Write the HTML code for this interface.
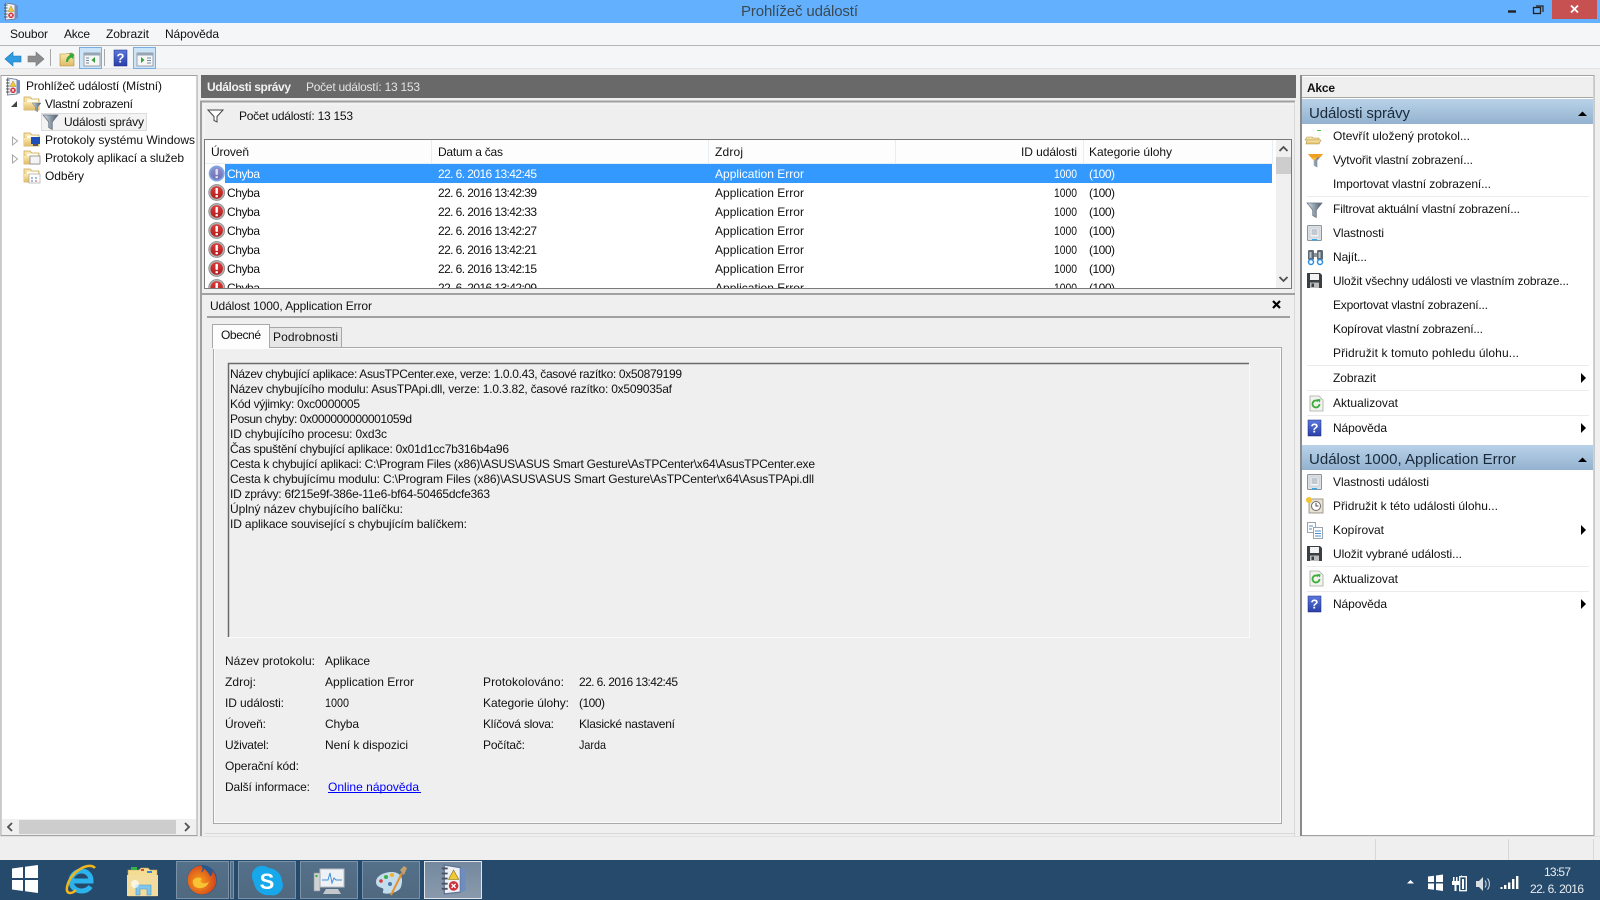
<!DOCTYPE html>
<html lang="cs">
<head>
<meta charset="utf-8">
<title>Prohlížeč událostí</title>
<style>
html,body{margin:0;padding:0;width:1600px;height:900px;overflow:hidden;background:#efefef}
svg{display:block}
text{font-family:"Liberation Sans",sans-serif;font-size:12px;fill:#111}
.w{fill:#fff}
.h{font-size:15px;fill:#1a2a3a}
.t{fill:#fff}
</style>
</head>
<body>
<svg width="1600" height="900" viewBox="0 0 1600 900" xmlns="http://www.w3.org/2000/svg">
<defs>
<linearGradient id="hd" x1="0" y1="0" x2="0" y2="1"><stop offset="0" stop-color="#b9d2e9"/><stop offset="1" stop-color="#93b2d0"/></linearGradient>
<linearGradient id="fold" x1="0" y1="0" x2="0" y2="1"><stop offset="0" stop-color="#fbe9b0"/><stop offset="1" stop-color="#dfbb68"/></linearGradient>
<linearGradient id="fun" x1="0" y1="0" x2="1" y2="0"><stop offset="0" stop-color="#dfe4e8"/><stop offset=".5" stop-color="#8b9cab"/><stop offset="1" stop-color="#4f5c6a"/></linearGradient>
<linearGradient id="sel" x1="0" y1="0" x2="0" y2="1"><stop offset="0" stop-color="#8d8fca"/><stop offset="1" stop-color="#6e70b4"/></linearGradient>
<linearGradient id="red" x1="0" y1="0" x2="0" y2="1"><stop offset="0" stop-color="#dd3b3b"/><stop offset="1" stop-color="#b01c1c"/></linearGradient>
<linearGradient id="tbtn" x1="0" y1="0" x2="0" y2="1"><stop offset="0" stop-color="#54708a"/><stop offset="1" stop-color="#50697f"/></linearGradient>
<linearGradient id="tact" x1="0" y1="0" x2="0" y2="1"><stop offset="0" stop-color="#73889e"/><stop offset="1" stop-color="#8a9aac"/></linearGradient>
<radialGradient id="ff" cx=".4" cy=".55" r=".6"><stop offset="0" stop-color="#f7a21c"/><stop offset="1" stop-color="#d6431a"/></radialGradient>
<linearGradient id="hlp" x1="0" y1="0" x2="0" y2="1"><stop offset="0" stop-color="#5a78dc"/><stop offset="1" stop-color="#2a40a8"/></linearGradient>
<clipPath id="lst"><rect x="205" y="140" width="1086" height="148"/></clipPath>

<g id="err"><circle r="8" fill="#b0b0b0"/><circle r="8" fill="none" stroke="#8a8a8a" stroke-width=".7"/><circle r="6.2" fill="url(#red)"/><rect x="-1.2" y="-4.6" width="2.4" height="6" rx=".8" fill="#fff"/><rect x="-1.2" y="2.6" width="2.4" height="2.2" rx=".6" fill="#fff"/></g>
<g id="errs"><circle r="8" fill="#7ea6e4"/><circle r="6.2" fill="url(#sel)"/><rect x="-1.2" y="-4.6" width="2.4" height="6" rx=".8" fill="#dfe0f4"/><rect x="-1.2" y="2.6" width="2.4" height="2.2" rx=".6" fill="#dfe0f4"/></g>
<g id="folder"><path d="M0 1h6l2 2h7v11H0z" fill="url(#fold)" stroke="#c7a254" stroke-width=".7"/><rect x="3" y="3.5" width="11" height="4" fill="#fffdf2"/><path d="M0 6h15v8H0z" fill="url(#fold)"/></g>
<g id="funnel"><path d="M0 0h15L9.3 7v7.5L5.7 12.5V7z" fill="url(#fun)" stroke="#66717c" stroke-width=".7"/></g>
<g id="prop"><rect x=".5" y=".5" width="14" height="15" rx="1" fill="#dde1e5" stroke="#8c949c"/><rect x="3" y="3" width="9" height="9" fill="#f4f6f8" stroke="#b4bbc2" stroke-width=".6"/><path d="M4.500 5h6M4.500 7h6M4.500 9h6" stroke="#6f7f90" stroke-width=".8"/><rect x="5" y="14" width="5" height="1.400" fill="#34a8e8"/></g>
<g id="disk"><path d="M0 0h13l2 2v13H0z" fill="#3a3f44"/><rect x="3" y="1" width="9" height="6" fill="#f3f3f3"/><rect x="3" y="9.500" width="9" height="5.500" fill="#bcbcbc"/><rect x="4.500" y="10.500" width="2.500" height="3.500" fill="#3a3f44"/></g>
<g id="ref"><path d="M1 0h9l4 4v11H1z" fill="#f2f3ee" stroke="#a6aaa4" stroke-width=".8"/><path d="M10.500 8a3.500 3.500 0 1 1-1.200-2.700" fill="none" stroke="#3cae3c" stroke-width="1.800"/><path d="M8 3l3.500.3-.6 3.300z" fill="#3cae3c"/></g>
<g id="help"><rect width="13" height="16" fill="url(#hlp)" stroke="#18287c" stroke-width=".5"/><text x="6.500" y="12.500" text-anchor="middle" style="font-size:13px;font-weight:bold;fill:#fff">?</text></g>
<g id="nb"><path d="M2.500 0l9.500 1.500v14.500l-9.500 1z" fill="#eef0f4" stroke="#5f7396" stroke-width=".8"/><path d="M12 1.500l3 1v12.500l-3 1z" fill="#6f8cc0"/><path d="M1 2h3.500M1 5h3.500M1 8h3.500M1 11h3.500M1 14h3.500" stroke="#4b535e" stroke-width="1.100"/><path d="M8 3l3 5.500H5z" fill="#f1c933" stroke="#8f7a18" stroke-width=".4"/><circle cx="8" cy="12.300" r="2.800" fill="#cf2e3a"/><path d="M6.800 11.100l2.400 2.400M9.200 11.100l-2.400 2.400" stroke="#fff" stroke-width=".8"/></g>
</defs>

<!-- window background -->
<rect width="1600" height="900" fill="#efefef"/>
<rect width="1600" height="23" fill="#63b0fe"/>
<use href="#nb" transform="translate(3,3)"/>
<text x="741" y="16" textLength="117" style="font-size:15px;fill:#3b4a52">Prohlížeč událostí</text>
<path d="M1508 11.500h8" stroke="#222" stroke-width="2.400"/>
<rect x="1533.500" y="7.500" width="7" height="6" fill="none" stroke="#222" stroke-width="1.300"/><path d="M1536 6h7v6" fill="none" stroke="#222" stroke-width="1.200"/>
<rect x="1552" y="0" width="45" height="19" fill="#c75050"/>
<path d="M1571 5.500l7 7M1578 5.500l-7 7" stroke="#fff" stroke-width="1.800"/>

<!-- menu -->
<rect y="23" width="1600" height="22" fill="#f5f6f8"/>
<rect y="45" width="1600" height="1" fill="#b4b4b4"/>
<text x="10" y="38" textLength="38">Soubor</text>
<text x="64" y="38" textLength="26">Akce</text>
<text x="106" y="38" textLength="43">Zobrazit</text>
<text x="165" y="38" textLength="54">Nápověda</text>

<!-- toolbar -->
<rect y="46" width="1600" height="22" fill="#f5f6f8"/>
<rect y="68" width="1600" height="1" fill="#e2e2e2"/>
<path d="M5 59l8-7v4h8v6h-8v4z" fill="#2f9be0" stroke="#1878b8" stroke-width=".6"/>
<path d="M44 59l-8-7v4h-8v6h8v4z" fill="#8c8c8c" stroke="#777" stroke-width=".6"/>
<rect x="50" y="49" width="1" height="17" fill="#a8a8a8"/>
<path d="M60 54h5l7-1 2 2v11H60z" fill="url(#fold)" stroke="#b08c3c" stroke-width=".6"/>
<path d="M66 62c0-4 2-6 4-7l-1-2 5 1-1 5-1.500-1.500c-2 1-3 2-3.500 4.500z" fill="#39a83a"/>
<rect x="79.500" y="47.500" width="22" height="21" fill="#cce4f7" stroke="#7aaee0"/>
<rect x="84" y="53" width="16" height="13" fill="#f6f6f6" stroke="#8a8f96" stroke-width=".8"/><rect x="84" y="53" width="16" height="2.500" fill="#98a6b4"/><path d="M86 58h3M86 60.500h3M86 63h3" stroke="#6d8aa0"/><path d="M95 57v6l-3.500-3z" fill="#34a03c"/>
<rect x="104" y="49" width="1" height="17" fill="#a8a8a8"/>
<use href="#help" transform="translate(114,50)"/>
<rect x="133.500" y="47.500" width="22" height="21" fill="#cce4f7" stroke="#7aaee0"/>
<rect x="137" y="53" width="16" height="13" fill="#f6f6f6" stroke="#8a8f96" stroke-width=".8"/><rect x="137" y="53" width="16" height="2.500" fill="#98a6b4"/><path d="M147 58h4M147 60.500h4M147 63h4" stroke="#6d8aa0"/><path d="M141 57v6l3.500-3z" fill="#34a03c"/>

<!-- left pane -->
<rect x="1" y="75.500" width="196" height="760" fill="#fff" stroke="#a2a2a2"/>
<use href="#nb" transform="translate(5,78)"/>
<text x="26" y="90" textLength="136">Prohlížeč událostí (Místní)</text>
<path d="M11 107h6v-6z" fill="#444"/>
<use href="#folder" transform="translate(24,96)"/>
<use href="#funnel" transform="translate(32,103) scale(.6)"/>
<text x="45" y="108" textLength="88">Vlastní zobrazení</text>
<rect x="41.500" y="113.500" width="105" height="17" fill="#f3f3f3" stroke="#dcdcdc"/>
<use href="#funnel" transform="translate(43,115)"/>
<text x="64" y="126" textLength="80">Události správy</text>
<path d="M12.500 137v8l5-4z" fill="#fff" stroke="#a6a6a6"/>
<use href="#folder" transform="translate(24,132)"/>
<rect x="31" y="137" width="9" height="7" fill="#1f4fb8"/><rect x="33" y="144" width="5" height="2" fill="#555"/>
<text x="45" y="144" textLength="150">Protokoly systému Windows</text>
<path d="M12.500 155v8l5-4z" fill="#fff" stroke="#a6a6a6"/>
<use href="#folder" transform="translate(24,150)"/>
<rect x="30" y="156" width="10" height="8" fill="#f4f4f4" stroke="#7b7b7b" stroke-width=".7"/>
<text x="45" y="162" textLength="139">Protokoly aplikací a služeb</text>
<use href="#folder" transform="translate(24,168)"/>
<rect x="29" y="174" width="11" height="9" fill="#fff" stroke="#999" stroke-width=".6"/><path d="M31 178h2M35 178h2M31 181h2" stroke="#3875c8"/><path d="M35 181h2" stroke="#d44"/>
<text x="45" y="180" textLength="39">Odběry</text>
<rect x="2" y="819" width="194" height="16" fill="#f0f0f0"/>
<rect x="19" y="820" width="157" height="14" fill="#cdcdcd"/>
<path d="M12 823l-4 4 4 4M185 823l4 4-4 4" fill="none" stroke="#505050" stroke-width="1.800"/>

<!-- center header -->
<rect x="201" y="75" width="1095" height="23" fill="#696969"/>
<text x="207" y="91" textLength="84" style="font-weight:bold;fill:#f2f2f2">Události správy</text>
<text x="306" y="91" textLength="114" style="fill:#e4e4e4">Počet událostí: 13 153</text>

<!-- list panel -->
<path d="M201 836V101.500H1295" fill="none" stroke="#a0a0a0" stroke-width="2"/>
<path d="M204 139v-35h1090" fill="none" stroke="#fff" stroke-width="1" opacity=".5"/>
<path d="M208 110h15l-6 6.500v5.500l-3-1.500v-4z" fill="#fff" stroke="#444" stroke-width="1"/>
<text x="239" y="120" textLength="114">Počet událostí: 13 153</text>
<rect x="204.500" y="139.500" width="1087" height="149" fill="#fff" stroke="#7a7a7a"/>
<rect x="205" y="140" width="1067" height="23" fill="#fdfdfd"/>
<rect x="205" y="163" width="1067" height="1" fill="#e6edf5"/>
<rect x="431" y="140" width="1" height="24" fill="#e6edf5"/>
<rect x="708" y="140" width="1" height="24" fill="#e6edf5"/>
<rect x="895" y="140" width="1" height="24" fill="#e6edf5"/>
<rect x="1083" y="140" width="1" height="24" fill="#e6edf5"/>
<rect x="1272" y="140" width="1" height="24" fill="#e6edf5"/>
<text x="211" y="156" textLength="38">Úroveň</text>
<text x="438" y="156" textLength="65">Datum a čas</text>
<text x="715" y="156" textLength="28">Zdroj</text>
<text x="1021" y="156" textLength="56">ID události</text>
<text x="1089" y="156" textLength="83">Kategorie úlohy</text>

<rect x="225" y="164" width="1047" height="19" fill="#3399ff"/>
<g clip-path="url(#lst)">
<use href="#errs" x="216.700" y="173.500"/>
<text class="w" x="227" y="178" textLength="33">Chyba</text>
<text class="w" x="438" y="178" textLength="99">22. 6. 2016 13:42:45</text>
<text class="w" x="715" y="178" textLength="89">Application Error</text>
<text class="w" x="1054" y="178" textLength="23" lengthAdjust="spacingAndGlyphs">1000</text>
<text class="w" x="1089" y="178" textLength="26">(100)</text>

<use href="#err" x="216.700" y="192.500"/>
<text x="227" y="197" textLength="33">Chyba</text><text x="438" y="197" textLength="99">22. 6. 2016 13:42:39</text><text x="715" y="197" textLength="89">Application Error</text><text x="1054" y="197" textLength="23" lengthAdjust="spacingAndGlyphs">1000</text><text x="1089" y="197" textLength="26">(100)</text>
<use href="#err" x="216.700" y="211.500"/>
<text x="227" y="216" textLength="33">Chyba</text><text x="438" y="216" textLength="99">22. 6. 2016 13:42:33</text><text x="715" y="216" textLength="89">Application Error</text><text x="1054" y="216" textLength="23" lengthAdjust="spacingAndGlyphs">1000</text><text x="1089" y="216" textLength="26">(100)</text>
<use href="#err" x="216.700" y="230.500"/>
<text x="227" y="235" textLength="33">Chyba</text><text x="438" y="235" textLength="99">22. 6. 2016 13:42:27</text><text x="715" y="235" textLength="89">Application Error</text><text x="1054" y="235" textLength="23" lengthAdjust="spacingAndGlyphs">1000</text><text x="1089" y="235" textLength="26">(100)</text>
<use href="#err" x="216.700" y="249.500"/>
<text x="227" y="254" textLength="33">Chyba</text><text x="438" y="254" textLength="99">22. 6. 2016 13:42:21</text><text x="715" y="254" textLength="89">Application Error</text><text x="1054" y="254" textLength="23" lengthAdjust="spacingAndGlyphs">1000</text><text x="1089" y="254" textLength="26">(100)</text>
<use href="#err" x="216.700" y="268.500"/>
<text x="227" y="273" textLength="33">Chyba</text><text x="438" y="273" textLength="99">22. 6. 2016 13:42:15</text><text x="715" y="273" textLength="89">Application Error</text><text x="1054" y="273" textLength="23" lengthAdjust="spacingAndGlyphs">1000</text><text x="1089" y="273" textLength="26">(100)</text>
<use href="#err" x="216.700" y="287.500"/>
<text x="227" y="292" textLength="33">Chyba</text><text x="438" y="292" textLength="99">22. 6. 2016 13:42:09</text><text x="715" y="292" textLength="89">Application Error</text><text x="1054" y="292" textLength="23" lengthAdjust="spacingAndGlyphs">1000</text><text x="1089" y="292" textLength="26">(100)</text>
</g>
<rect x="1276" y="140" width="15" height="148" fill="#f0f0f0"/>
<rect x="1276" y="157" width="15" height="17" fill="#cdcdcd"/>
<path d="M1279.500 151l4-4 4 4M1279.500 277l4 4 4-4" fill="none" stroke="#505050" stroke-width="1.800"/>
<rect x="1294" y="102" width="1" height="734" fill="#d8d8d8"/>

<!-- detail panel -->
<rect x="202" y="293" width="1093" height="2" fill="#a0a0a0"/>
<text x="210" y="310" textLength="162">Událost 1000, Application Error</text>
<path d="M1273 301l7 7M1280 301l-7 7" stroke="#000" stroke-width="2.200"/>
<rect x="207" y="316" width="1083" height="2" fill="#a0a0a0"/>

<rect x="213.500" y="347.500" width="1068" height="476" fill="#efefef" stroke="#a8a8a8"/>
<rect x="214.500" y="348.500" width="1066" height="474" fill="none" stroke="#fbfbfb"/>
<path d="M269.500 347V327.500H341.500V347" fill="#e6e6e6" stroke="#a8a8a8"/>
<text x="273" y="341" textLength="65">Podrobnosti</text>
<path d="M212.500 348V324.500H269.500V348" fill="#fdfdfd" stroke="#a8a8a8"/>
<rect x="213" y="346" width="56" height="3" fill="#fdfdfd"/>
<text x="221" y="339" textLength="40">Obecné</text>

<rect x="228" y="363" width="1021" height="274" fill="#efefef"/>
<path d="M228.500 637V363.500H1249" fill="none" stroke="#6a6a6a" stroke-width="1.500"/>
<path d="M229 637.500H1249.500V363" fill="none" stroke="#fafafa"/>
<text x="230" y="378" textLength="452">Název chybující aplikace: AsusTPCenter.exe, verze: 1.0.0.43, časové razítko: 0x50879199</text>
<text x="230" y="393" textLength="442">Název chybujícího modulu: AsusTPApi.dll, verze: 1.0.3.82, časové razítko: 0x509035af</text>
<text x="230" y="408" textLength="130">Kód výjimky: 0xc0000005</text>
<text x="230" y="423" textLength="182">Posun chyby: 0x000000000001059d</text>
<text x="230" y="438" textLength="157">ID chybujícího procesu: 0xd3c</text>
<text x="230" y="453" textLength="279">Čas spuštění chybující aplikace: 0x01d1cc7b316b4a96</text>
<text x="230" y="468" textLength="585">Cesta k chybující aplikaci: C:\Program Files (x86)\ASUS\ASUS Smart Gesture\AsTPCenter\x64\AsusTPCenter.exe</text>
<text x="230" y="483" textLength="584">Cesta k chybujícímu modulu: C:\Program Files (x86)\ASUS\ASUS Smart Gesture\AsTPCenter\x64\AsusTPApi.dll</text>
<text x="230" y="498" textLength="260">ID zprávy: 6f215e9f-386e-11e6-bf64-50465dcfe363</text>
<text x="230" y="513" textLength="173">Úplný název chybujícího balíčku:</text>
<text x="230" y="528" textLength="237">ID aplikace související s chybujícím balíčkem:</text>

<text x="225" y="665" textLength="90">Název protokolu:</text><text x="325" y="665" textLength="45">Aplikace</text>
<text x="225" y="686" textLength="31">Zdroj:</text><text x="325" y="686" textLength="89">Application Error</text>
<text x="483" y="686" textLength="81">Protokolováno:</text><text x="579" y="686" textLength="99">22. 6. 2016 13:42:45</text>
<text x="225" y="707" textLength="59">ID události:</text><text x="325" y="707" textLength="24" lengthAdjust="spacingAndGlyphs">1000</text>
<text x="483" y="707" textLength="86">Kategorie úlohy:</text><text x="579" y="707" textLength="26">(100)</text>
<text x="225" y="728" textLength="41">Úroveň:</text><text x="325" y="728" textLength="34">Chyba</text>
<text x="483" y="728" textLength="71">Klíčová slova:</text><text x="579" y="728" textLength="96">Klasické nastavení</text>
<text x="225" y="749" textLength="44">Uživatel:</text><text x="325" y="749" textLength="83">Není k dispozici</text>
<text x="483" y="749" textLength="42">Počítač:</text><text x="579" y="749" textLength="27" lengthAdjust="spacingAndGlyphs">Jarda</text>
<text x="225" y="770" textLength="74">Operační kód:</text>
<text x="225" y="791" textLength="85">Další informace:</text>
<text x="328" y="791" textLength="91" style="fill:#0000ff">Online nápověda</text>
<rect x="328" y="792" width="93" height="1" fill="#0000ff"/>
<rect x="205" y="833" width="1089" height="1" fill="#d8d8d8"/>

<!-- right pane -->
<rect x="1301" y="75.500" width="293" height="760" fill="#fff" stroke="#a2a2a2"/>
<rect x="1300" y="75" width="2" height="761" fill="#8a8a8a"/>
<rect x="1302" y="77" width="291" height="20" fill="#efefef"/>
<rect x="1302" y="97" width="291" height="1" fill="#a8a8a8"/>
<text x="1307" y="92" textLength="28" style="font-weight:bold">Akce</text>
<rect x="1302" y="99" width="291" height="25" fill="url(#hd)"/>
<text class="h" x="1309" y="118" textLength="101">Události správy</text>
<path d="M1578 116l4.500-4.500 4.500 4.500z" fill="#000"/>

<path d="M1307 137h5l1 1h6v2h-14z" fill="#f3dfa4" stroke="#b59448" stroke-width=".6"/><path d="M1307 140h14l-2 4h-13z" fill="url(#fold)" stroke="#b59448" stroke-width=".6"/><rect x="1317" y="130" width="4" height="1" fill="#50c850"/>
<text x="1333" y="140" textLength="137">Otevřít uložený protokol...</text>
<path d="M1308 154h15l-5.700 6.500v7l-3.600-2v-5z" fill="url(#fun)"/><path d="M1308 154h15l-3 3.500h-9z" fill="#f0a020"/><path d="M1311 157.500h6l-2.500 3h-1z" fill="#f5b83a"/>
<text x="1333" y="164" textLength="140">Vytvořit vlastní zobrazení...</text>
<text x="1333" y="188" textLength="158">Importovat vlastní zobrazení...</text>
<rect x="1307" y="196" width="282" height="1" fill="#ebebeb"/>
<use href="#funnel" transform="translate(1307,203)"/>
<text x="1333" y="213" textLength="187">Filtrovat aktuální vlastní zobrazení...</text>
<use href="#prop" transform="translate(1307,225)"/>
<text x="1333" y="237" textLength="51">Vlastnosti</text>
<rect x="1308" y="250" width="6" height="10" rx="1.500" fill="#5d6872"/><rect x="1317" y="250" width="6" height="10" rx="1.500" fill="#5d6872"/><rect x="1314" y="253" width="3" height="4" fill="#8c959c"/><rect x="1309.500" y="252" width="2" height="6" fill="#b8c4ce"/><rect x="1318.500" y="252" width="2" height="6" fill="#b8c4ce"/><circle cx="1311" cy="262" r="2.500" fill="#fff" stroke="#2c8ee0" stroke-width="1.500"/><circle cx="1320" cy="262" r="2.500" fill="#fff" stroke="#2c8ee0" stroke-width="1.500"/>
<text x="1333" y="261" textLength="34">Najít...</text>
<use href="#disk" transform="translate(1307,273)"/>
<text x="1333" y="285" textLength="236">Uložit všechny události ve vlastním zobraze...</text>
<text x="1333" y="309" textLength="155">Exportovat vlastní zobrazení...</text>
<text x="1333" y="333" textLength="150">Kopírovat vlastní zobrazení...</text>
<text x="1333" y="357" textLength="186">Přidružit k tomuto pohledu úlohu...</text>
<rect x="1307" y="365" width="282" height="1" fill="#ebebeb"/>
<text x="1333" y="382" textLength="43">Zobrazit</text>
<path d="M1581 373l5 5-5 5z" fill="#000"/>
<rect x="1307" y="390" width="282" height="1" fill="#ebebeb"/>
<use href="#ref" transform="translate(1309,396)"/>
<text x="1333" y="407" textLength="65">Aktualizovat</text>
<rect x="1307" y="415" width="282" height="1" fill="#ebebeb"/>
<use href="#help" transform="translate(1308,420)"/>
<text x="1333" y="432" textLength="54">Nápověda</text>
<path d="M1581 423l5 5-5 5z" fill="#000"/>

<rect x="1302" y="445" width="291" height="25" fill="url(#hd)"/>
<text class="h" x="1309" y="464" textLength="207">Událost 1000, Application Error</text>
<path d="M1578 462l4.500-4.500 4.500 4.500z" fill="#000"/>
<use href="#prop" transform="translate(1307,474)"/>
<text x="1333" y="486" textLength="96">Vlastnosti události</text>
<rect x="1309" y="499" width="14" height="14" fill="#e8e2d4" stroke="#8a8478" stroke-width=".8"/><circle cx="1316" cy="506" r="4.500" fill="#fff" stroke="#6a6a6a"/><path d="M1316 503v3h2.500" stroke="#444" fill="none"/><circle cx="1309" cy="500" r="3" fill="#f4c430"/>
<text x="1333" y="510" textLength="165">Přidružit k této události úlohu...</text>
<rect x="1307.500" y="522.500" width="8" height="10" fill="#fff" stroke="#9aa4ae"/><rect x="1313.500" y="527.500" width="9" height="11" fill="#fff" stroke="#9aa4ae"/><path d="M1315 531h6M1315 533.500h6M1315 536h6M1309 526h4M1309 529h3" stroke="#4a8fd0"/>
<text x="1333" y="534" textLength="51">Kopírovat</text>
<path d="M1581 525l5 5-5 5z" fill="#000"/>
<use href="#disk" transform="translate(1307,546)"/>
<text x="1333" y="558" textLength="129">Uložit vybrané události...</text>
<rect x="1307" y="566" width="282" height="1" fill="#ebebeb"/>
<use href="#ref" transform="translate(1309,571)"/>
<text x="1333" y="583" textLength="65">Aktualizovat</text>
<rect x="1307" y="591" width="282" height="1" fill="#ebebeb"/>
<use href="#help" transform="translate(1308,596)"/>
<text x="1333" y="608" textLength="54">Nápověda</text>
<path d="M1581 599l5 5-5 5z" fill="#000"/>

<!-- status bar -->
<rect y="836" width="1600" height="24" fill="#efefef"/>
<rect y="836" width="1600" height="1" fill="#e2e2e2"/>
<rect x="1375" y="839" width="1" height="21" fill="#d8d8d8"/>
<rect x="1508" y="839" width="1" height="21" fill="#d8d8d8"/>
<rect x="1593" y="839" width="1" height="21" fill="#d8d8d8"/>

<!-- taskbar -->
<rect y="860" width="1600" height="40" fill="#264a6b"/>
<path d="M12 868.500l11-1.500v11H12zM25 866.800l13-1.800v13H25zM12 880h11v11l-11-1.500zM25 880h13v13l-13-1.800z" fill="#fff"/>
<!-- IE -->
<path d="M72 881h19c0-6-4-10-9.500-10S71 875.500 71 881s4.500 10 10.500 10c4 0 7-1.500 9-4.500" fill="none" stroke="#2bb3ee" stroke-width="5"/>
<path d="M95 868c-5-6-20 1-26 13-3 7-3 12 1 12 2 0 4-1 6-3" fill="none" stroke="#f2b61d" stroke-width="2.500"/>
<!-- explorer -->
<path d="M128 870h11l2-2h7l2 2h7v26h-29z" fill="#f4dd92" stroke="#c4a55a" stroke-width=".6"/>
<rect x="131" y="867" width="6" height="3" fill="#35b24a"/><rect x="141" y="869" width="3" height="2" fill="#d84a3a"/><rect x="147" y="871" width="5" height="2" fill="#3c86d8"/>
<path d="M127 875h31v21h-31z" fill="#f3dd9e"/>
<path d="M136 895v-10h15v10h-4v-6h-7v6z" fill="#7fc7ee" stroke="#4a94c8" stroke-width=".6"/>
<circle cx="135" cy="884" r="4" fill="#fff" opacity=".7"/>
<!-- firefox -->
<rect x="176.500" y="861.500" width="52" height="37" fill="url(#tbtn)" stroke="#7a92a8"/>
<rect x="230.500" y="861.500" width="3" height="37" fill="url(#tbtn)" stroke="#7a92a8"/>
<circle cx="202" cy="880" r="15" fill="#27588f"/>
<path d="M201 865.500a14.500 14.500 0 1 0 15 18c1-5-1-10-4-13 1 3 0 5-2 6-1-4-4-6-6-8 0 2-1 3-3 4 2-3 2-5 0-7z" fill="url(#ff)"/>
<path d="M193 880c3-3 7-3 9-1-2 1-2 3 0 4 3 1 6 0 7-2-1 5-6 8-11 7-4-1-6-4-5-8z" fill="#f9c433"/>
<!-- skype -->
<rect x="238.500" y="861.500" width="57" height="37" fill="url(#tbtn)" stroke="#7a92a8"/>
<path d="M260 866a14 14 0 0 1 9 2 14 14 0 0 1 13 13 10 10 0 0 1-3 12 10 10 0 0 1-9 2 14 14 0 0 1-16-12 14 14 0 0 1-2-8 10 10 0 0 1 8-9z" fill="#16a8ea"/>
<text x="267" y="889" text-anchor="middle" style="font-size:22px;font-weight:bold;fill:#fff">S</text>
<!-- monitor -->
<rect x="300.500" y="861.500" width="57" height="37" fill="url(#tbtn)" stroke="#7a92a8"/>
<rect x="320" y="869" width="24" height="18" fill="#eef2f5" stroke="#b8bec4"/>
<path d="M322 880h6l2-7 2 10 2-5 2 2h6" fill="none" stroke="#3f8fd8" stroke-width="1"/>
<rect x="314" y="873" width="6" height="18" fill="#cfd2d4" stroke="#93979a" stroke-width=".6"/><rect x="315.500" y="875" width="2" height="2" fill="#3a3"/>
<path d="M326 889h12l3 5h-18z" fill="#c4c8cc"/>
<!-- paint -->
<rect x="362.500" y="861.500" width="57" height="37" fill="url(#tbtn)" stroke="#7a92a8"/>
<path d="M376 882c0-8 14-12 21-9 7 3 5 10 4 14-2 5-12 8-18 6-1-1 2-4-1-5-3-1-6-2-6-6z" fill="#c4ddec"/>
<circle cx="381" cy="881" r="1.800" fill="#d83a3a"/><circle cx="386" cy="877" r="2" fill="#3cae48"/><circle cx="392" cy="875" r="2" fill="#f0b42c"/><circle cx="390" cy="884" r="2" fill="#4c7ab0"/>
<path d="M391 895l11-22" stroke="#e6922a" stroke-width="2"/><path d="M400 870l4-4 3 2-3 7z" fill="#c2a26c"/>
<!-- event viewer -->
<rect x="424.500" y="861.500" width="57" height="37" fill="url(#tact)" stroke="#dfe5ea"/>
<use href="#nb" transform="translate(440,865) scale(1.700)"/>

<!-- tray -->
<path d="M1407 883.500l3.500-3.500 3.500 3.500z" fill="#fff"/>
<path d="M1428 876.500l6-.8v6.300h-6zM1436 875.500l7-1v7.500h-7zM1428 883.500h6v6.300l-6-.8zM1436 883.500h7v7.500l-7-1z" fill="#fff"/>
<rect x="1453" y="877" width="1.500" height="4" fill="#fff"/><rect x="1456" y="877" width="1.500" height="4" fill="#fff"/><path d="M1452 881h7v4h-2.500v6h-2v-6H1452z" fill="#fff"/>
<rect x="1461" y="875.500" width="1" height="1" fill="#fff"/><rect x="1459.700" y="876.700" width="6.600" height="14" fill="none" stroke="#fff" stroke-width="1.300"/><rect x="1462" y="879" width="2" height="10" fill="#fff"/>
<path d="M1476 881h3l4-4v14l-4-4h-3z" fill="#d8e0e6"/><path d="M1485 880.500c1.500 2 1.500 5 0 7M1487.500 878.500c2.500 3 2.500 8 0 11" fill="none" stroke="#d8e0e6" stroke-width="1"/>
<path d="M1500.500 887h2v2h-2zM1504 885h2.400v4H1504zM1508 882.500h2.400V889H1508zM1512 879h2.400v10H1512zM1516 876h2.400v13H1516z" fill="#fff"/>
<text x="1544" y="876" textLength="27" style="fill:#e8edf2">13:57</text>
<text x="1530" y="893" textLength="54" style="fill:#e8edf2">22. 6. 2016</text>
</svg>
</body>
</html>
